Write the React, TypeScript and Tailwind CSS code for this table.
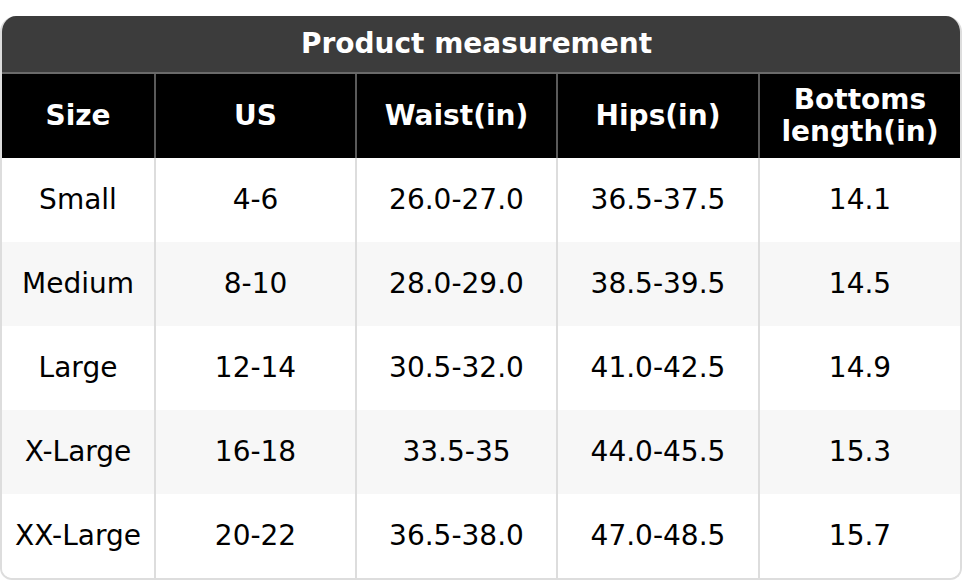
import React from "react";

interface Row {
  size: string;
  us: string;
  waist: string;
  hips: string;
  length: string;
}

const rows: Row[] = [
  { size: "Small", us: "4-6", waist: "26.0-27.0", hips: "36.5-37.5", length: "14.1" },
  { size: "Medium", us: "8-10", waist: "28.0-29.0", hips: "38.5-39.5", length: "14.5" },
  { size: "Large", us: "12-14", waist: "30.5-32.0", hips: "41.0-42.5", length: "14.9" },
  { size: "X-Large", us: "16-18", waist: "33.5-35", hips: "44.0-45.5", length: "15.3" },
  { size: "XX-Large", us: "20-22", waist: "36.5-38.0", hips: "47.0-48.5", length: "15.7" },
];

const cols = "grid grid-cols-[154px_201px_201px_202px_1fr]";

export default function App() {
  return (
    <div className="w-[962px] h-[580px] bg-white pt-4 font-['DejaVu_Sans',sans-serif]">
      <div className="rounded-t-2xl rounded-b-xl border-2 border-t-0 border-[#dddddd] overflow-hidden">
        <div className="h-[58px] bg-[#3c3c3c] border-b-2 border-[#6a6a6a] flex items-center justify-center pr-[9px] text-white font-bold text-[28px]">
          Product measurement
        </div>
        <div className={`${cols} h-[84px] bg-black text-white font-bold text-[28px] leading-[32px]`}>
          {["Size", "US", "Waist(in)", "Hips(in)"].map((h) => (
            <div key={h} className="flex items-center justify-center border-r-2 border-[#5a5a5a]">
              {h}
            </div>
          ))}
          <div className="flex items-center justify-center text-center">
            Bottoms
            <br />
            length(in)
          </div>
        </div>
        {rows.map((r, idx) => (
          <div
            key={r.size}
            className={`${cols} h-[84px] text-[28px] text-black ${idx % 2 === 0 ? "bg-white" : "bg-[#f7f7f7]"}`}
          >
            {[r.size, r.us, r.waist, r.hips].map((v, i) => (
              <div key={i} className="flex items-center justify-center border-r-2 border-[#dddddd]">
                {v}
              </div>
            ))}
            <div className="flex items-center justify-center">{r.length}</div>
          </div>
        ))}
      </div>
    </div>
  );
}
